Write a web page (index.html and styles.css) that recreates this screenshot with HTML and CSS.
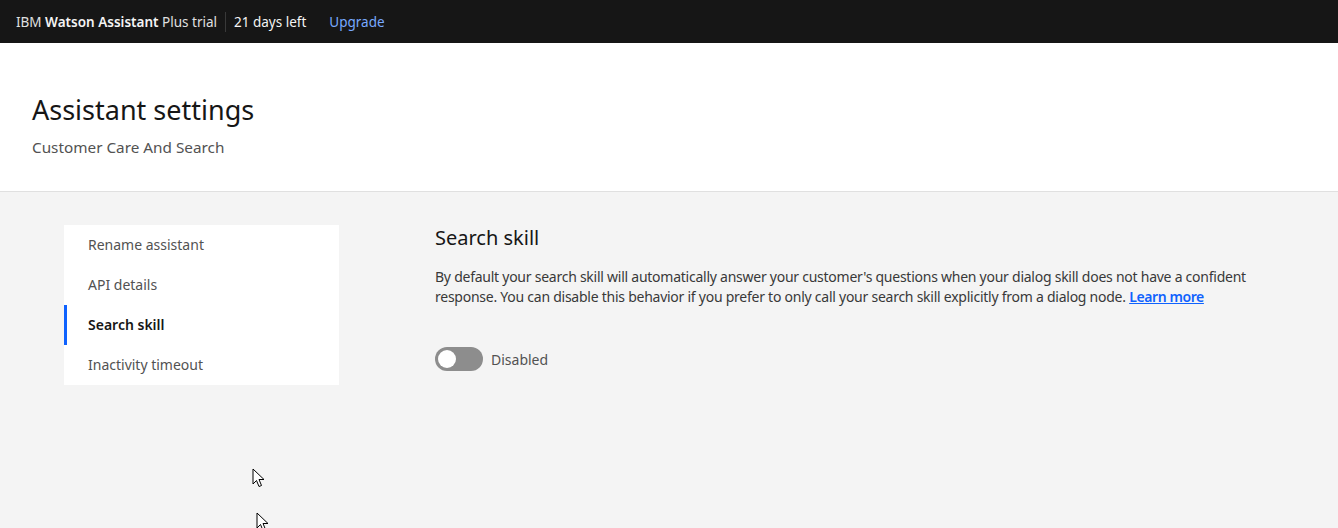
FILE: index.html
```html
<!DOCTYPE html>
<html lang="en">
<head>
  <meta charset="UTF-8" />
  <meta name="viewport" content="width=device-width, initial-scale=1.0" />
  <title>Assistant settings</title>
  <link rel="stylesheet" href="styles.css">
</head>
<body>
  <header class="topbar">
    <span class="brand">IBM <strong>Watson Assistant</strong> Plus trial</span>
    <span class="days">21 days left</span>
    <a class="upgrade" href="#">Upgrade</a>
  </header>

  <section class="page-head">
    <h1>Assistant settings</h1>
    <p class="sub">Customer Care And Search</p>
  </section>

  <main class="settings">
    <nav class="side-nav">
      <a href="#">Rename assistant</a>
      <a href="#">API details</a>
      <a href="#" class="active">Search skill</a>
      <a href="#">Inactivity timeout</a>
    </nav>

    <div class="panel">
      <h2>Search skill</h2>
      <p class="desc">By default your search skill will automatically answer your customer's questions when your dialog skill does not have a confident response. You can disable this behavior if you prefer to only call your search skill explicitly from a dialog node. <a href="#">Learn more</a></p>
      <label class="toggle">
        <span class="track"><span class="knob"></span></span>
        <span class="toggle-text">Disabled</span>
      </label>
    </div>
  </main>

  <!-- mouse cursors captured in the screenshot -->
  <svg class="cursor c1" width="14" height="21" viewBox="0 0 14 21"><path d="M1 1 L1 16 L4.5 12.5 L7 18.5 L9.5 17.5 L7 11.5 L12 11.5 Z" fill="#fff" stroke="#000" stroke-width="1"/></svg>
  <svg class="cursor c2" width="14" height="21" viewBox="0 0 14 21"><path d="M1 1 L1 16 L4.5 12.5 L7 18.5 L9.5 17.5 L7 11.5 L12 11.5 Z" fill="#fff" stroke="#000" stroke-width="1"/></svg>
</body>
</html>
```

FILE: styles.css
```css
body { margin: 0; font-family: "Noto Sans", "Liberation Sans", sans-serif; color: #161616; background: #f4f4f4; overflow: hidden; height: 528px; }
.topbar { height: 43px; background: #161616; color: #e0e0e0; display: flex; align-items: center; padding-left: 16px; font-size: 13.5px; }
.brand { padding-right: 8px; border-right: 1px solid #393939; line-height: 20px; }
.brand strong { font-weight: 600; color: #f4f4f4; }
.days { padding-left: 8px; color: #f4f4f4; }
.upgrade { margin-left: 23px; color: #78a9ff; text-decoration: none; }
.page-head { background: #fff; border-bottom: 1px solid #e0e0e0; padding: 49px 32px 0; height: 99px; }
.page-head h1 { margin: 0; font-size: 27px; font-weight: 400; line-height: 36px; }
.page-head .sub { margin: 8px 0 0; font-size: 15.3px; color: #525252; line-height: 22px; }
.settings { display: flex; gap: 96px; padding: 33px 64px 0; }
.side-nav { width: 275px; flex-shrink: 0; background: #fff; align-self: flex-start; display: flex; flex-direction: column; }
.side-nav a { height: 40px; line-height: 40px; padding-left: 21px; font-size: 14px; color: #525252; text-decoration: none; border-left: 3px solid transparent; }
.side-nav a.active { border-left-color: #0f62fe; color: #161616; font-weight: 600; }
.panel { width: 835px; flex-shrink: 0; }
.panel h2 { margin: 0; font-size: 20px; font-weight: 400; line-height: 26px; color: #161616; }
.desc { margin: 16px 0 0; font-size: 14px; line-height: 20px; color: #393939; letter-spacing: -0.25px; }
.desc a { color: #0f62fe; font-weight: 600; letter-spacing: -0.4px; }
.toggle { display: flex; align-items: center; gap: 8px; margin-top: 40px; font-size: 14px; color: #525252; }
.track { width: 48px; height: 24px; border-radius: 12px; background: #8d8d8d; position: relative; display: block; }
.knob { position: absolute; left: 3px; top: 3px; width: 18px; height: 18px; border-radius: 50%; background: #fff; }
.cursor { position: absolute; }
.c1 { left: 252px; top: 468px; }
.c2 { left: 256px; top: 512px; }
```
